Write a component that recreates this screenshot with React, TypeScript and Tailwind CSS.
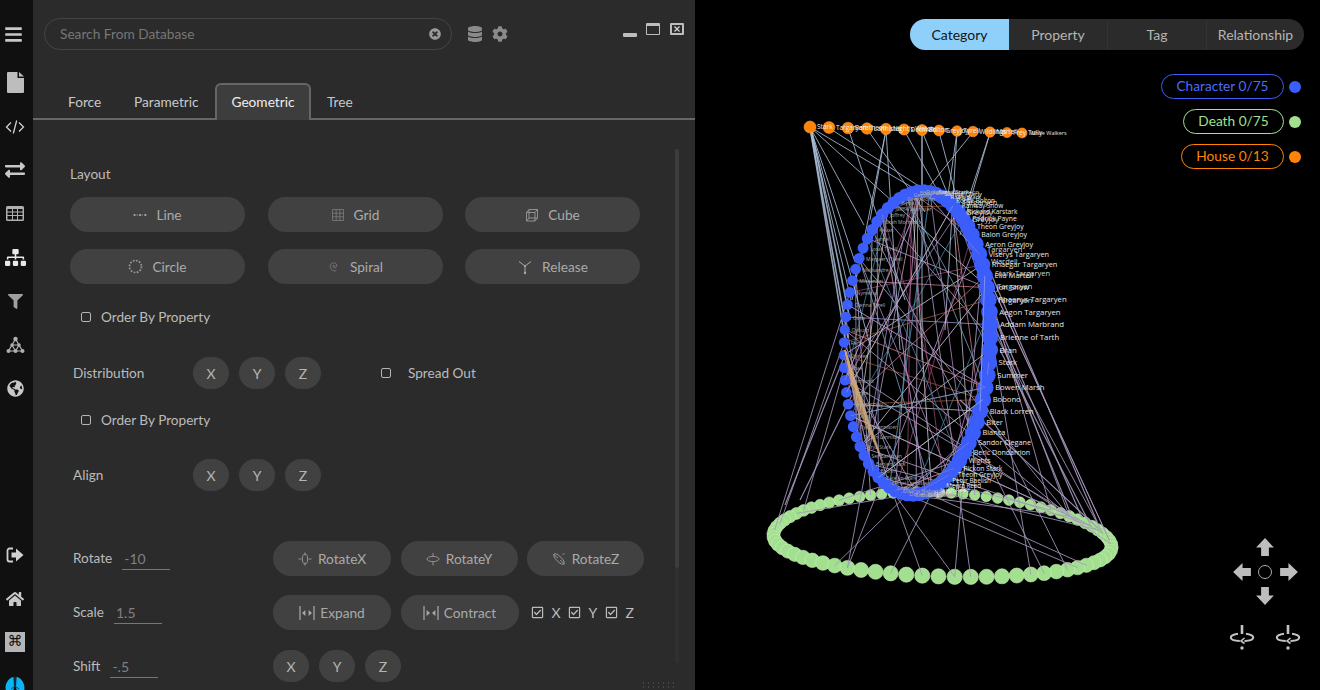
import React from "react";
import { FaBars, FaExchangeAlt, FaSitemap, FaFilter, FaGlobeAmericas, FaHome, FaDatabase, FaCog, FaTimesCircle, FaRegCheckSquare } from "react-icons/fa";

function rng(seed: number) {
  let a = seed;
  return () => {
    a |= 0; a = (a + 0x6d2b79f5) | 0;
    let t = Math.imul(a ^ (a >>> 15), 1 | a);
    t = (t + Math.imul(t ^ (t >>> 7), 61 | t)) ^ t;
    return ((t ^ (t >>> 14)) >>> 0) / 4294967296;
  };
}

const houseNames = ["Stark", "Targaryen", "Baratheon", "Lannister", "Night's Watch", "Dothraki", "Bolton", "Greyjoy", "Tyrell", "Wildlings", "Martell", "Frey", "Tully"];
const orange = houseNames.map((n, i) => {
  const xs = [810, 829, 848, 867, 886, 904, 922, 939, 957, 973, 990, 1007, 1022];
  return { n, x: xs[i], y: 127 + i * 0.5, r: 6 - i * 0.08 };
});

const charNames = [
  "Stannis Baratheon", "Sansa Stark", "Samwell Tarly", "Robb Stark", "Roose Bolton", "Ramsay Snow", "Rickard Karstark", "Podrick Payne", "Theon Greyjoy",
  "Balon Greyjoy", "Aeron Greyjoy", "Viserys Targaryen", "Rhaegar Targaryen", "Elia Martell", "Jon Snow", "Rhaenys Targaryen", "Aegon Targaryen", "Addam Marbrand",
  "Brienne of Tarth", "Bran", "Stark", "Summer", "Bowen Marsh", "Bobono", "Black Lorren", "Biter", "Bianca", "Sandor Clegane", "Beric Dondarrion", "Wights",
  "Rickon Stark", "Theon Greyjoy", "Petyr Baelish", "Meera Reed", "Jojen Reed", "Hodor", "Gilly", "Euron Greyjoy", "Edmure Tully", "Doran Martell", "Daario Naharis",
  "Craster", "Cersei Lannister", "Catelyn Stark", "Bronn", "Benjen Stark", "Ser Barristan", "Arya Stark", "Tyrion Lannister", "Tywin Lannister", "Varys", "Walder Frey",
  "Ygritte", "Tormund", "Shae", "Shireen", "Renly", "Qyburn", "Osha", "Olenna Tyrell", "Nymeria", "Missandei", "Melisandre", "Margaery Tyrell", "Loras Tyrell",
  "Lancel", "Kevan", "Jorah Mormont", "Joffrey", "Jaime Lannister", "Illyrio", "Grey Worm", "Gendry", "Eddard Stark", "Drogo",
];

const blue = charNames.map((n, i) => {
  const th = ((i + 0.3) * 4.8 * Math.PI) / 180;
  const s = Math.sin(th);
  const c = Math.cos(th);
  return { n, x: 917 + 73 * s + 5 * c, y: 343 - 152 * c, r: 6.8 + 1.6 * s, s };
});

const green = Array.from({ length: 75 }, (_, i) => {
  const t = (i * 4.8 * Math.PI) / 180;
  const s = Math.sin(t);
  const c = Math.cos(t);
  return { x: 942.5 + 167 * c * (1 + 0.16 * s), y: 534.5 + 42 * s + 6 * c, r: 6.4 + 1.2 * s };
}).sort((a, b) => a.r - b.r);

type Edge = { x1: number; y1: number; x2: number; y2: number; c: string; w: number; o: number };
const edges: Edge[] = (() => {
  const r = rng(1234);
  const out: Edge[] = [];
  const pick = <T,>(a: T[]) => a[Math.floor(r() * a.length)];
  const bb = ["#b58fc9", "#7fa8c9", "#c5a0d0", "#9a4a70", "#a05a3a", "#d8d8e8", "#4a86aa", "#d08090", "#9a9ad8", "#c8c8d8"];
  for (let i = 0; i < 72; i++) {
    const a = pick(blue), b = pick(blue);
    out.push({ x1: a.x, y1: a.y, x2: b.x, y2: b.y, c: pick(bb), w: 0.9, o: 0.85 });
  }
  for (let i = 0; i < 38; i++) {
    const a = green[Math.floor(r() * 75)], b = pick(blue);
    out.push({ x1: a.x, y1: a.y, x2: b.x, y2: b.y, c: "#a798bd", w: 1, o: 0.85 });
  }
  [[785, 505, 846, 352], [800, 500, 852, 395], [1098, 524, 986, 262], [1082, 518, 988, 300], [1090, 524, 1000, 350], [1070, 512, 978, 285], [1100, 530, 960, 400]].forEach((p) =>
    out.push({ x1: p[0], y1: p[1], x2: p[2], y2: p[3], c: "#a798bd", w: 1.2, o: 0.9 }));
  const hb = "#a9bdd6";
  [[810, 127, 846, 345], [810, 127, 848, 338], [811, 127, 850, 320], [810, 127, 851, 300], [810, 127, 855, 262], [810, 127, 864, 225], [810, 127, 870, 345], [810, 127, 925, 195], [810, 127, 985, 285],
   [829, 128, 925, 190], [867, 129, 925, 212], [886, 130, 870, 220], [886, 130, 852, 300], [886, 130, 900, 350], [904, 130, 940, 195], [922, 131, 922, 195], [922, 131, 922, 360], [922, 131, 950, 200], [957, 132, 948, 195], [957, 132, 945, 330],
   [973, 132, 925, 192], [990, 133, 968, 200], [990, 133, 960, 235], [848, 128, 905, 300], [939, 132, 968, 240]].forEach((p, i) =>
    out.push({ x1: p[0], y1: p[1], x2: p[2], y2: p[3], c: hb, w: i < 3 ? 1.6 : 1, o: 0.85 }));
  return out;
})();

const fan = Array.from({ length: 18 }, (_, i) => ({ x2: 856 + i * 1.6, y2: 405 + i * 3.4, c: i % 3 ? "#c8a070" : "#f0c080" }));

const extraLabels: [string, number, number][] = [["Targaryen", 987, 252], ["Targaryen", 997, 289], ["Targaryen", 997, 303], ["Stark Targaryen", 995, 276], ["Wardell", 991, 264], ["Pyp", 958, 200], ["Greyjoy", 966, 215], ["Targaryen", 962, 205], ["Greyjoy", 972, 222]];

function Graph() {
  return (
    <svg viewBox="695 0 625 690" width="625" height="690" className="block" style={{ fontFamily: "'Open Sans',sans-serif" }}>
      {green.map((g, i) => <circle key={i} cx={g.x} cy={g.y} r={g.r} fill="#a2e08f" stroke="#c8efba" strokeWidth="0.6" />)}
      {edges.map((e, i) => <line key={i} x1={e.x1} y1={e.y1} x2={e.x2} y2={e.y2} stroke={e.c} strokeWidth={e.w} opacity={e.o} />)}
      {blue.map((b, i) => <circle key={i} cx={b.x} cy={b.y} r={b.r} fill="#3b5dfb" />)}
      {orange.map((o, i) => <circle key={i} cx={o.x} cy={o.y} r={o.r} fill="#ff8307" stroke="#ffae5c" strokeWidth="0.5" />)}
      {fan.map((f, i) => <line key={i} x1={845} y1={350} x2={f.x2} y2={f.y2} stroke={f.c} strokeWidth="0.8" opacity="0.75" />)}
      {edges.filter((_, i) => i % 5 === 0 && i < 72).map((e, i) => <line key={i} x1={e.x1} y1={e.y1} x2={e.x2} y2={e.y2} stroke={e.c} strokeWidth="0.6" opacity="0.7" />)}
      {blue.map((b, i) => {
        const size = 5.4 + 2.4 * Math.max(b.s, -0.4) + (b.s > 0 ? 0 : 0.6);
        return (
          <text key={i} x={b.x + b.r + 1.5} y={b.y + 2.5} fontSize={size} fill={b.s > 0.05 ? "#ebebeb" : "#a8a8a8"}>{b.n}</text>
        );
      })}
      {extraLabels.map(([n, x, y], i) => <text key={i} x={x} y={y} fontSize="7.5" fill="#d8d8d8">{n}</text>)}
      {orange.map((o, i) => <text key={i} x={o.x + o.r + 1} y={o.y + 2} fontSize="6.5" fill="#f0f0f0">{o.n}</text>)}
      <text x="1030" y="135" fontSize="5.5" fill="#e0e0e0">White Walkers</text>
    </svg>
  );
}

const Rail = ({ children, h = "h-[43.7px]" }: { children: React.ReactNode; h?: string }) => (
  <div className={`${h} w-full flex items-center justify-center shrink-0 text-[#c8c8c8] pr-[3px]`}>{children}</div>
);

function I({ children, w = 14, h = 14, vb = "0 0 14 14" }: { children: React.ReactNode; w?: number; h?: number; vb?: string }) {
  return <svg width={w} height={h} viewBox={vb} fill="none" stroke="#9a9a9a" strokeWidth="0.9" className="shrink-0">{children}</svg>;
}

const LineI = () => <I><path d="M1 7h12" strokeDasharray="1.5 1" /><circle cx="1.5" cy="7" r="1" fill="#aaa" stroke="none" /><circle cx="7" cy="7" r="1" fill="#aaa" stroke="none" /><circle cx="12.5" cy="7" r="1" fill="#aaa" stroke="none" /></I>;
const GridI = () => <I><path d="M1.5 1.5h11v11h-11zM5.2 1v12M8.8 1v12M1 5.2h12M1 8.8h12" stroke="#777" /></I>;
const CubeI = () => <I><path d="M1.5 4.5h8.5v8.5h-8.5zM4 1.5h8.5v8.5h-8.5zM1.5 4.5L4 1.5M10 4.5l2.5-3M1.5 13l2.5-3M10 13l2.5-3" /></I>;
const CircleI = () => <I w={15} h={15}><circle cx="7" cy="7" r="5.6" strokeWidth="1.6" strokeDasharray="1.6 1.3" /></I>;
const SpiralI = () => <I><path d="M7.5 7.2a1 1 0 1 0-1.5-.6c.2 1.7 3 1.8 3.6-.2.6-2-1-3.8-3-3.6-2.2.2-3.8 2.3-3.3 4.6.5 2.6 3.2 4.2 6 3.4" stroke="#777" /></I>;
const ReleaseI = () => <I w={16} h={16} vb="0 0 16 16"><path d="M2 2.5L8 7l6-4.5M8 7v7" stroke="#aaa" strokeWidth="1" /><circle cx="8" cy="7" r="1" fill="#aaa" stroke="none" /><circle cx="8" cy="14" r="1.2" fill="#aaa" stroke="none" /></I>;
const RotX = () => <I><path d="M7 0.5v3M7 10.5v3M0.5 7h3M10.5 7h3" /><ellipse cx="7" cy="7" rx="2.6" ry="5" /></I>;
const RotY = () => <I><path d="M7 1v3M7 10v3.5" /><ellipse cx="7" cy="7" rx="6" ry="2.6" /></I>;
const RotZ = () => <I><ellipse cx="7" cy="7" rx="7" ry="2.6" transform="rotate(45 7 7)" /><path d="M1.5 2.5L6 6M12.5 1l-2 2M8 8l4.500 4" /></I>;
const ExpandI = () => <I w={16} h={16} vb="0 0 16 16"><path d="M1 1v14M15 1v14" strokeWidth="1.2" stroke="#aaa" /><path d="M3 8l3.4-3v6zM13 8l-3.4-3v6z" fill="#aaa" stroke="none" /></I>;
const ContractI = () => <I w={16} h={16} vb="0 0 16 16"><path d="M1 1v14M15 1v14" strokeWidth="1.2" stroke="#aaa" /><path d="M7 8L3.6 5v6zM9 8l3.4-3v6z" fill="#aaa" stroke="none" /></I>;

function Pill({ icon, label, w = "w-[175px]", gap = "gap-[9px]" }: { icon: React.ReactNode; label: string; w?: string; gap?: string }) {
  return (
    <div className={`${w} ${gap} h-[35px] rounded-full bg-[#414141] text-[#aaaaaa] flex items-center justify-center text-[13.7px] shrink-0`}>
      {icon}<span className="mt-[2px]">{label}</span>
    </div>
  );
}

function Circles() {
  return (
    <div className="flex gap-[10px]">
      {["X", "Y", "Z"].map((l) => (
        <div key={l} className="w-[36px] h-[32px] rounded-full bg-[#414141] text-[#b5b5b5] flex items-center justify-center text-[14px]">{l}</div>
      ))}
    </div>
  );
}

const Box = () => <span className="w-[10px] h-[10px] rounded-[2px] border border-[#b5b5b5] shrink-0 inline-block" />;

function OrderRow({ className }: { className: string }) {
  return (
    <div className={`flex items-center h-[20px] pl-[11px] gap-[10px] text-[13.6px] text-[#bbbbbb] ${className}`}>
      <Box /><span>Order By Property</span>
    </div>
  );
}

function Field({ label, value, w }: { label: string; value: string; w: string }) {
  return (
    <div className={`${w} pl-[3px] flex items-center gap-[10px] shrink-0`}>
      <span className="text-[13.6px] text-[#bbbbbb]">{label}</span>
      <input readOnly defaultValue={value} className="w-[48px] h-[22px] bg-transparent border-b border-[#777] text-[14px] text-[#808080] pl-[2px] outline-none mt-[1px]" />
    </div>
  );
}

function Arrow({ rot }: { rot: number }) {
  return (
    <svg width="20" height="20" viewBox="0 0 18 18" style={{ transform: `rotate(${rot}deg)` }}>
      <path d="M9 1L17 9.5H12.5V17H5.5V9.5H1Z" fill="#bdbdbd" />
    </svg>
  );
}
function Orbit() {
  return (
    <svg width="26" height="26" viewBox="0 0 26 26" fill="none" stroke="#c4c4c4">
      <path d="M13 1v9" strokeWidth="2.6" />
      <path d="M9 9.800C4.500 10.500 1.800 11.800 1.800 13.500c0 2 4 3.300 9 3.600M17 9.800c4.500.7 7.200 2 7.200 3.700 0 2-4 3.300-8.700 3.600" strokeWidth="2" />
      <path d="M15.500 14l-3.500 3 3.500 2.500" strokeWidth="1.600" />
      <circle cx="13" cy="24" r="1.700" fill="#c4c4c4" stroke="none" />
    </svg>
  );
}

export default function App() {
  return (
    <div className="w-[1320px] h-[690px] flex overflow-hidden bg-black font-['Lato',sans-serif]">
      <aside className="w-[33px] h-full bg-[#101010] flex flex-col shrink-0 overflow-hidden pt-[12px]">
        <Rail h="h-[44px] mb-[5px]"><FaBars size={19} className="-ml-[3px]" /></Rail>
        <Rail>
          <svg width="17" height="21" viewBox="0 0 17 21"><path d="M1 0h9.500v6H17v14a1 1 0 0 1-1 1H1a1 1 0 0 1-1-1V1a1 1 0 0 1 1-1zM12 0l5 4.500h-5z" fill="#bdbdbd" /></svg>
        </Rail>
        <Rail>
          <svg width="20" height="14" viewBox="0 0 20 14" fill="none" stroke="#d0d0d0" strokeWidth="1.3"><path d="M6 2.5L1.5 7 6 11.5M14 2.5L18.5 7 14 11.5M11.7 0.5L8.3 13.5" /></svg>
        </Rail>
        <Rail><FaExchangeAlt size={20} /></Rail>
        <Rail>
          <svg width="18" height="15" viewBox="0 0 18 15"><path fillRule="evenodd" d="M1.500 0h15A1.500 1.500 0 0 1 18 1.500v12a1.500 1.500 0 0 1-1.500 1.500h-15A1.500 1.500 0 0 1 0 13.500v-12A1.500 1.500 0 0 1 1.500 0zM1.500 3v2.500h4.500V3zM7 3v2.500h4V3zM12 3v2.500h4.500V3zM1.500 6.500V9h4.500V6.500zM7 6.500V9h4V6.500zM12 6.500V9h4.500V6.500zM1.500 10v3.500h4.500V10zM7 10v3.500h4V10zM12 10v3.500h4.500V10z" fill="#b0b0b0" /></svg>
        </Rail>
        <Rail><FaSitemap size={21} className="text-[#e8e8e8]" /></Rail>
        <Rail><FaFilter size={15} className="text-[#a0a0a0]" /></Rail>
        <Rail>
          <svg width="19" height="18" viewBox="0 0 19 18" fill="none" stroke="#b0b0b0" strokeWidth="1.200"><path d="M9.500 3L2.500 15h14zM6 9l3.500 6L13 9z" /><g fill="#b0b0b0" stroke="none"><circle cx="9.500" cy="3" r="2.200" /><circle cx="6" cy="9" r="1.700" /><circle cx="13" cy="9" r="1.700" /><circle cx="2.500" cy="15" r="2" /><circle cx="9.500" cy="15" r="2" /><circle cx="16.500" cy="15" r="2" /></g></svg>
        </Rail>
        <Rail><FaGlobeAmericas size={17} /></Rail>
        <div className="mt-auto -mb-[16px] flex flex-col">
          <Rail h="h-[44px]">
            <svg width="18" height="16" viewBox="0 0 18 16" fill="none"><path d="M7 1.500H3.500a2 2 0 0 0-2 2v9a2 2 0 0 0 2 2H7" stroke="#d0d0d0" strokeWidth="1.800" /><path d="M5.500 5.500H10V1.500L17.500 8 10 14.500v-4H5.500z" fill="#d0d0d0" /></svg>
          </Rail>
          <Rail h="h-[43px]"><FaHome size={18} /></Rail>
          <Rail h="h-[43px]">
            <div className="w-[20px] h-[20px] bg-[#b5b5b5] text-[#111] flex items-center justify-center text-[15px] leading-none font-['DejaVu_Sans',sans-serif]">⌘</div>
          </Rail>
          <Rail h="h-[43px]">
            <svg width="20" height="20" viewBox="0 0 20 20"><path d="M8.500 2C5 2 0.500 7 0.500 13c0 4 3 5 5.500 4 2-1 3-3 3-5zM11.500 2c3.500 0 8 5 8 11 0 4-3 5-5.500 4-2-1-3-3-3-5z" fill="#0cb4f6" /><path d="M10 2v10M6 14l4-3 4 3" stroke="#0b4a66" strokeWidth="1" fill="none" /></svg>
          </Rail>
        </div>
      </aside>

      <main className="relative w-[662px] h-full bg-[#2b2b2b] shrink-0 overflow-hidden">
        <div className="pt-[18px] h-[50px] flex items-center pl-[11px] pr-[11px]">
          <div className="w-[408px] h-[32px] rounded-full border border-[#444] flex items-center pl-[15px] pr-[10px] text-[13.7px] text-[#777]">
            <span className="flex-1">Search From Database</span>
            <FaTimesCircle size={12} className="text-[#999]" />
          </div>
          <FaDatabase size={16} className="text-[#8a8a8a] ml-[15px]" />
          <FaCog size={16} className="text-[#8a8a8a] ml-[9px] -mt-[1px]" />
          <div className="ml-auto flex items-start gap-[9px] -mt-[7px]">
            <span className="w-[14px] h-[4px] rounded-[1px] bg-[#bdbdbd] mt-[9px]" />
            <span className="w-[14px] h-[12px] border border-[#bdbdbd] border-t-[3px] rounded-[1px] -mt-[1px]" />
            <span className="w-[14px] h-[12px] border-2 border-[#bdbdbd] rounded-[1px] flex items-center justify-center -mt-[1px] ml-[1px]">
              <span className="w-[6px] h-[6px] bg-[#d0d0d0] [clip-path:polygon(0_15%,15%_0,50%_35%,85%_0,100%_15%,65%_50%,100%_85%,85%_100%,50%_65%,15%_100%,0_85%,35%_50%)]" />
            </span>
          </div>
        </div>

        <div className="mt-[33px] h-[37px] border-b-2 border-[#666] flex items-stretch text-[13.7px] text-[#c8c8c8] pl-[35px]">
          <div className="w-[66px] flex items-center pt-[3px]">Force</div>
          <div className="w-[81px] flex items-center pt-[3px]">Parametric</div>
          <div className="w-[96px] -mb-[2px] bg-[#3d3d3d] border-2 border-b-0 border-[#666] rounded-t-[6px] flex items-center justify-center text-[#ededed]">Geometric</div>
          <div className="pl-[16px] flex items-center pt-[3px]">Tree</div>
        </div>

        <div className="pl-[37px]">
          <div className="mt-[44px] h-[20px] flex items-center text-[13.6px] text-[#bbbbbb]">Layout</div>
          <div className="mt-[13px] grid grid-cols-[175px_175px_175px] gap-x-[22.500px] gap-y-[17px]">
            <Pill icon={<LineI />} label="Line" />
            <Pill icon={<GridI />} label="Grid" />
            <Pill icon={<CubeI />} label="Cube" />
            <Pill icon={<CircleI />} label="Circle" />
            <Pill icon={<SpiralI />} label="Spiral" />
            <Pill icon={<ReleaseI />} label="Release" />
          </div>
          <OrderRow className="mt-[23px]" />

          <div className="mt-[30px] flex items-center h-[32px]">
            <div className="w-[123px] pl-[3px] text-[13.6px] text-[#bbbbbb]">Distribution</div>
            <Circles />
            <div className="ml-[60px] flex items-center gap-[17px] text-[13.6px] text-[#bbbbbb]"><Box /><span>Spread Out</span></div>
          </div>
          <OrderRow className="mt-[21px]" />
          <div className="mt-[29px] flex items-center h-[32px]">
            <div className="w-[123px] pl-[3px] text-[13.6px] text-[#bbbbbb]">Align</div>
            <Circles />
          </div>

          <div className="mt-[50px] flex items-center">
            <Field label="Rotate" value="-10" w="w-[203px]" />
            <div className="flex gap-[9.500px]">
              <Pill icon={<RotX />} label="RotateX" w="w-[118px]" gap="gap-[6px]" />
              <Pill icon={<RotY />} label="RotateY" w="w-[117px]" gap="gap-[6px]" />
              <Pill icon={<RotZ />} label="RotateZ" w="w-[117px]" gap="gap-[6px]" />
            </div>
          </div>
          <div className="mt-[19px] flex items-center">
            <Field label="Scale" value="1.5" w="w-[203px]" />
            <div className="flex gap-[9.500px]">
              <Pill icon={<ExpandI />} label="Expand" w="w-[118px]" gap="gap-[5px]" />
              <Pill icon={<ContractI />} label="Contract" w="w-[118px]" gap="gap-[5px]" />
            </div>
            <div className="ml-[12px] flex items-center text-[14px] text-[#bbbbbb]">
              <FaRegCheckSquare size={13} className="text-[#bbb] mr-[8px]" /><span className="w-[16px]">X</span>
              <FaRegCheckSquare size={13} className="text-[#bbb] mr-[8px]" /><span className="w-[16px]">Y</span>
              <FaRegCheckSquare size={13} className="text-[#bbb] mr-[8px]" /><span>Z</span>
            </div>
          </div>
          <div className="mt-[20px] flex items-center">
            <Field label="Shift" value="-.5" w="w-[203px]" />
            <Circles />
          </div>
        </div>

        <div className="absolute left-[642px] top-[149px] w-[4px] h-[514px] rounded-full bg-[#303030]">
          <div className="w-full h-[419px] rounded-full bg-[#3d3d3d]" />
        </div>
        <div className="absolute left-[608px] top-[681px] w-[36px] h-[9px] opacity-30 bg-[radial-gradient(#888_1px,transparent_1px)] bg-[length:5px_4px]" />
      </main>

      <section className="relative flex-1 h-full bg-black overflow-hidden">
        <Graph />

        <div className="absolute top-[19px] left-[215px] w-[394px] h-[31px] rounded-full overflow-hidden bg-[#2b2b2b] flex text-[14px] text-[#b5b5b5]">
          <div className="w-[99px] bg-[#8fd0fb] text-[#141414] flex items-center justify-center">Category</div>
          <div className="w-[99px] border-r border-[#333] flex items-center justify-center">Property</div>
          <div className="w-[99px] border-r border-[#333] flex items-center justify-center">Tag</div>
          <div className="w-[97px] flex items-center justify-center">Relationship</div>
        </div>

        <div className="absolute top-[74px] right-[19px] flex flex-col items-end gap-[10px] text-[13.7px]">
          {[
            { t: "Character 0/75", w: "w-[123px]", b: "border-[#3b5dfb] text-[#4a6cff]", d: "bg-[#3b5dfb]" },
            { t: "Death 0/75", w: "w-[101px]", b: "border-[#a2e08f] text-[#a2e08f]", d: "bg-[#a2e08f]" },
            { t: "House 0/13", w: "w-[103px]", b: "border-[#ff8307] text-[#ff8307]", d: "bg-[#ff8307]" },
          ].map((l) => (
            <div key={l.t} className="flex items-center gap-[5px]">
              <div className={`${l.w} h-[25px] rounded-full border flex items-center justify-center ${l.b}`}>{l.t}</div>
              <span className={`w-[12px] h-[12px] rounded-full ${l.d}`} />
            </div>
          ))}
        </div>

        <div className="absolute left-[535px] top-[537px] w-[70px] grid grid-cols-[23px_24px_23px] grid-rows-[20px_29px_20px] place-items-center">
          <span /><Arrow rot={0} /><span />
          <Arrow rot={-90} />
          <span className="w-[14px] h-[14px] rounded-full border border-[#aaa]" />
          <Arrow rot={90} />
          <span /><Arrow rot={180} /><span />
        </div>
        <div className="absolute left-[534px] top-[624px] flex gap-[20px]">
          <Orbit /><Orbit />
        </div>
      </section>
    </div>
  );
}
